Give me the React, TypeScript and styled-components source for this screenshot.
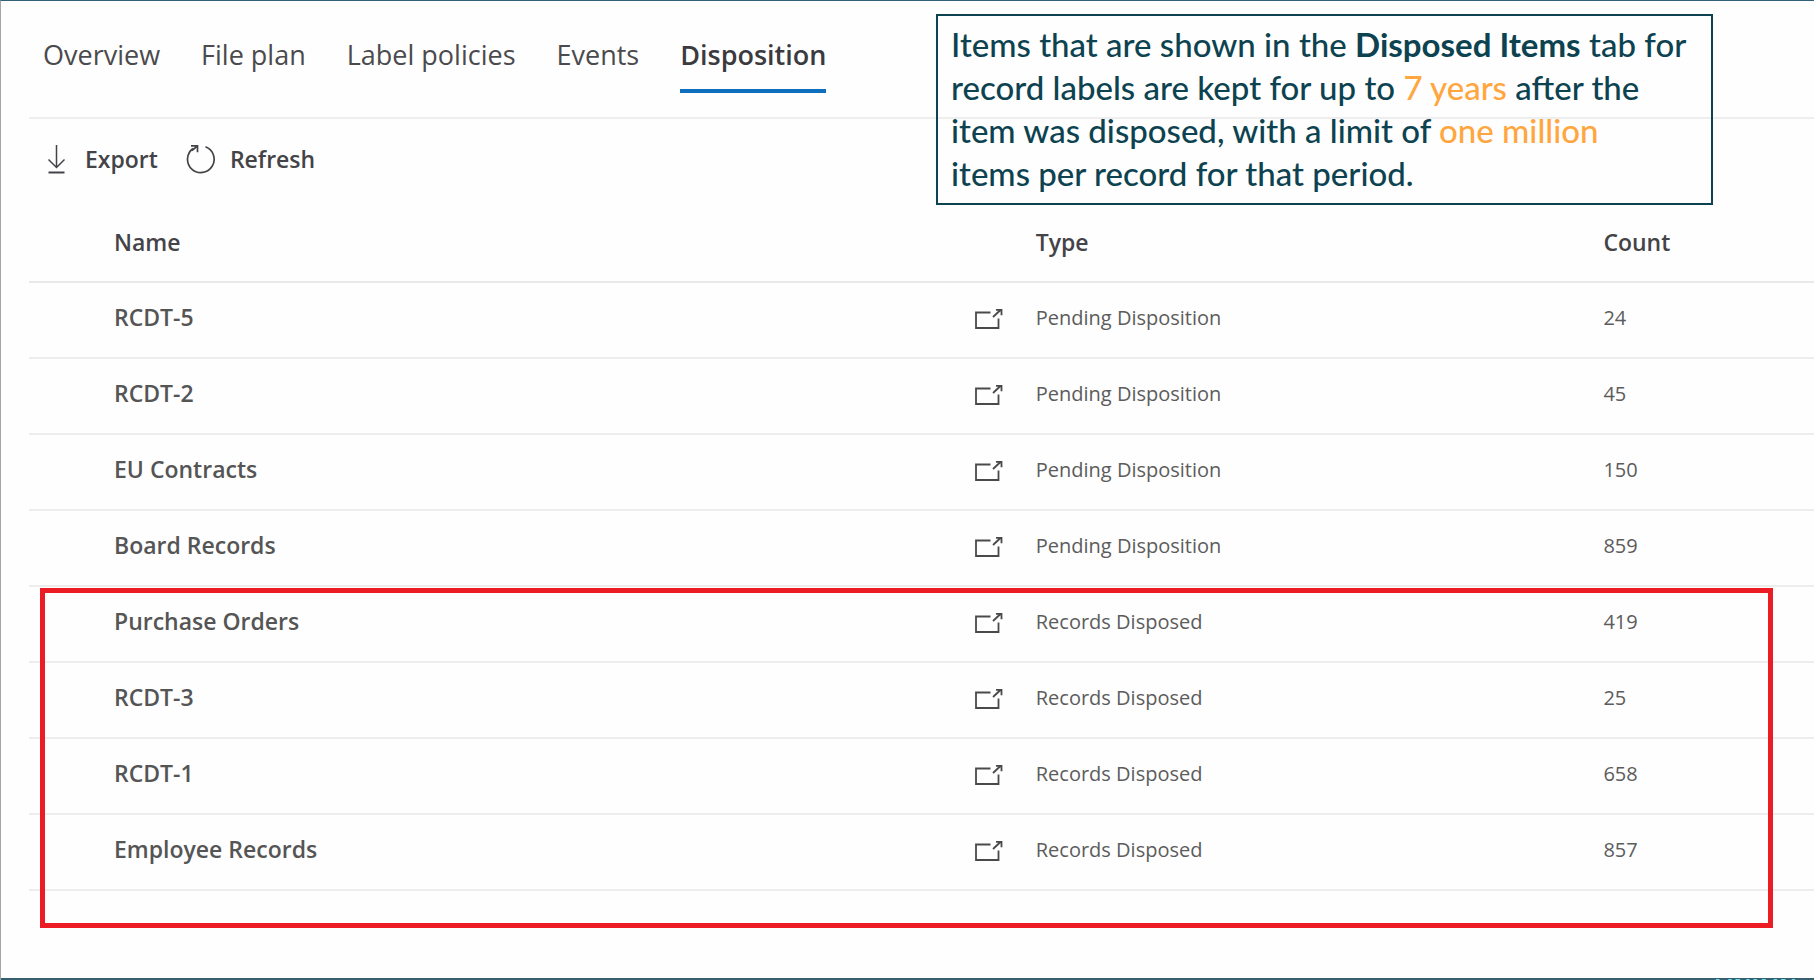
import React from "react";
import styled, { createGlobalStyle } from "styled-components";

const GlobalStyle = createGlobalStyle`
  * { box-sizing: border-box; }
  body { margin: 0; background: #fefefe; font-family: "Open Sans", "Noto Sans", sans-serif; color: #3b3a39; }
`;

const Page = styled.div`
  position: relative;
  display: flex;
  flex-direction: column;
  min-height: 100vh;
  border-top: 1px solid #35607a;
  border-left: 1px solid #a3a5a7;
`;

const Main = styled.main`
  flex: 1;
  padding-left: 28px;
`;

const Tabs = styled.nav`
  display: flex;
  align-items: flex-start;
  gap: 41px;
  height: 118px;
  padding: 32px 0 0 14px;
  border-bottom: 2px solid #eeeeee;
`;

const Tab = styled.a<{ $active?: boolean }>`
  height: 60px;
  font-size: 27px;
  line-height: 44px;
  font-weight: ${(p) => (p.$active ? 600 : 400)};
  color: ${(p) => (p.$active ? "#3b3a3e" : "#4b4a4d")};
  border-bottom: 4px solid ${(p) => (p.$active ? "#106ebe" : "transparent")};
  text-decoration: none;
  white-space: nowrap;
`;

const Toolbar = styled.div`
  display: flex;
  align-items: center;
  gap: 28px;
  height: 80px;
  padding-left: 14px;
`;

const Command = styled.button`
  display: flex;
  align-items: center;
  gap: 14px;
  padding: 0;
  border: 0;
  background: none;
  color: #444347;
  font: 600 23px/32px "Open Sans", "Noto Sans", sans-serif;
`;

const Table = styled.table`
  width: 100%;
  table-layout: fixed;
  border-collapse: separate;
  border-spacing: 0;
`;

const Col = styled.col<{ $width?: string }>`
  width: ${(p) => p.$width ?? "auto"};
`;

const HeadCell = styled.th<{ $inset?: boolean }>`
  height: 84px;
  padding: 4px 0 0 ${(p) => (p.$inset ? "85px" : "0")};
  border-bottom: 2px solid #e9e9e9;
  text-align: left;
  font-size: 23px;
  line-height: 32px;
  font-weight: 600;
  color: #444347;
`;

const Cell = styled.td`
  height: 76px;
  padding: 0 0 4px;
  border-bottom: 2px solid #ededed;
  font-size: 20px;
  line-height: 32px;
  color: #5c5c5c;
`;

const IconCell = styled(Cell)`
  padding-bottom: 0;
`;

const NameCell = styled.th`
  height: 76px;
  padding: 0 0 6px 85px;
  border-bottom: 2px solid #ededed;
  text-align: left;
  font-size: 23px;
  line-height: 32px;
  font-weight: 600;
  color: #555555;
`;

const OpenButton = styled.button`
  display: block;
  padding: 0;
  border: 0;
  background: none;
  color: #4a4a4a;
`;

const Note = styled.aside`
  position: absolute;
  top: 13px;
  left: 935px;
  width: 777px;
  padding: 7px 13px 8px;
  border: 2px solid #0d4350;
  color: #0d4350;
  font: 500 33px/43px Lato, sans-serif;
  white-space: nowrap;
`;

const Accent = styled.span`
  color: #ffa63f;
`;

const Highlight = styled.div`
  position: absolute;
  top: 587px;
  left: 39px;
  right: 41px;
  height: 340px;
  border: 5px solid #ec1c24;
  pointer-events: none;
`;

const Footer = styled.footer`
  display: flex;
  justify-content: flex-end;
  height: 2px;
  padding-right: 17px;
  overflow: hidden;
  background: #35606f;
`;

const FooterLink = styled.a`
  color: #74dcec;
  font-size: 22px;
  line-height: 14px;
  font-weight: 700;
  text-decoration: none;
`;

const ExportIcon = () => (
  <svg width="28" height="32" viewBox="0 0 28 32" fill="none" stroke="currentColor" strokeWidth="1.5" aria-hidden="true">
    <path d="M13.5 2v22M5.5 16.5l8 8 8-8" />
    <path d="M5.5 29.5h16" strokeWidth="2" />
  </svg>
);

const RefreshIcon = () => (
  <svg width="30" height="32" viewBox="0 0 30 32" fill="none" stroke="currentColor" strokeWidth="1.7" aria-hidden="true">
    <path d="M19.5 3.8A13.3 13.3 0 1 1 7 5.5" />
    <path d="M5 2.8h6.5v6.5M11.5 2.8L6 7.5" />
  </svg>
);

const OpenIcon = () => (
  <svg width="30" height="22" viewBox="0 0 30 22" fill="none" stroke="currentColor" strokeWidth="1.8" aria-hidden="true">
    <path d="M15.5 4.5H1V20h22.5V10.5" />
    <path d="M18 9l7.5-7M21 1.8h5.5v5.5" />
  </svg>
);

const tabs = ["Overview", "File plan", "Label policies", "Events", "Disposition"];

const rows = [
  { name: "RCDT-5", type: "Pending Disposition", count: 24 },
  { name: "RCDT-2", type: "Pending Disposition", count: 45 },
  { name: "EU Contracts", type: "Pending Disposition", count: 150 },
  { name: "Board Records", type: "Pending Disposition", count: 859 },
  { name: "Purchase Orders", type: "Records Disposed", count: 419 },
  { name: "RCDT-3", type: "Records Disposed", count: 25 },
  { name: "RCDT-1", type: "Records Disposed", count: 658 },
  { name: "Employee Records", type: "Records Disposed", count: 857 },
];

export default function App() {
  return (
    <Page>
      <GlobalStyle />
      <Main>
        <Tabs>
          {tabs.map((tab) => (
            <Tab key={tab} href="#" $active={tab === "Disposition"}>{tab}</Tab>
          ))}
        </Tabs>
        <Toolbar>
          <Command type="button"><ExportIcon />Export</Command>
          <Command type="button"><RefreshIcon />Refresh</Command>
        </Toolbar>
        <Table>
          <colgroup>
            <Col />
            <Col $width="3.4%" />
            <Col $width="31.8%" />
            <Col $width="11.8%" />
          </colgroup>
          <thead>
            <tr>
              <HeadCell scope="col" colSpan={2} $inset>Name</HeadCell>
              <HeadCell scope="col">Type</HeadCell>
              <HeadCell scope="col">Count</HeadCell>
            </tr>
          </thead>
          <tbody>
            {rows.map((row) => (
              <tr key={row.name}>
                <NameCell scope="row">{row.name}</NameCell>
                <IconCell><OpenButton type="button" aria-label={`Open ${row.name}`}><OpenIcon /></OpenButton></IconCell>
                <Cell>{row.type}</Cell>
                <Cell>{row.count}</Cell>
              </tr>
            ))}
          </tbody>
        </Table>
      </Main>
      <Footer>
        <FooterLink href="#">LINK IN</FooterLink>
      </Footer>
      <Note>
        Items that are shown in the <b>Disposed Items</b> tab for<br />
        record labels are kept for up to <Accent>7 years</Accent> after the<br />
        item was disposed, with a limit of <Accent>one million</Accent><br />
        items per record for that period.
      </Note>
      <Highlight />
    </Page>
  );
}
